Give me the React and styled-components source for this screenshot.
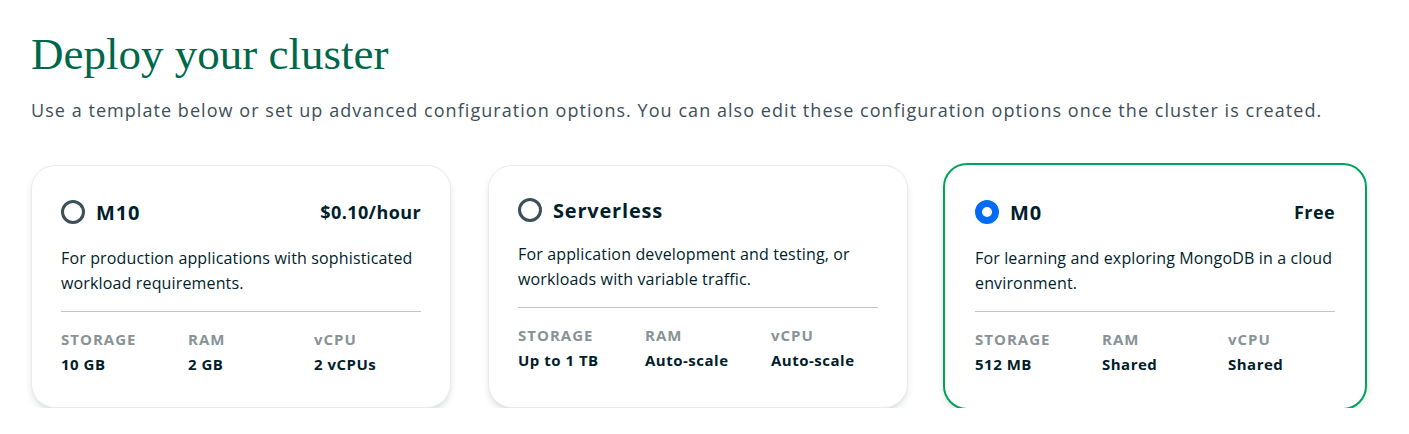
import React from 'react'
import styled, { createGlobalStyle } from 'styled-components'

const Global = createGlobalStyle`
body{
  margin:0;
  background:#ffffff;
  font-family:"Open Sans", "Liberation Sans", sans-serif;
}
`

const Page = styled.div`
padding:28px 31px 0 31px;
`

const Title = styled.h1`
margin:0;
font-family:"Liberation Serif", serif;
font-weight:400;
font-size:45px;
line-height:52px;
color:#00684A;
`

const Lead = styled.p`
margin:18px 0 0 0;
font-size:18px;
line-height:24px;
letter-spacing:1.05px;
color:#3D4F58;
`

const Cards = styled.div`
display:flex;
align-items:flex-start;
gap:37px;
margin-top:43px;
`

const Card = styled.div`
width:${p => p.selected ? '424px' : '420px'};
height:${p => p.selected ? '247px' : '243px'};
margin:${p => p.selected ? '-2px' : '0'};
flex-shrink:0;
box-sizing:border-box;
padding:${p => p.selected ? '33px 30px 0 30px' : '32px 29px 0 29px'};
border-radius:24px;
background:#fff;
border:${p => p.selected ? '2px solid #00A35C' : '1px solid #E8EDEB'};
box-shadow:0 4px 10px -4px rgba(0,30,43,0.3);
`

const Head = styled.div`
display:flex;
align-items:center;
justify-content:space-between;
height:${p => p.short ? '24px' : '28px'};
`

const Name = styled.div`
display:flex;
align-items:center;
gap:11px;
font-size:20px;
font-weight:700;
letter-spacing:0.8px;
color:#001E2B;
`

const Radio = styled.span`
width:24px;
height:24px;
flex-shrink:0;
box-sizing:border-box;
border-radius:50%;
border:${p => p.checked ? '7px solid #016BF8' : '3px solid #3D4F58'};
background:#fff;
`

const Price = styled.div`
font-size:18px;
font-weight:700;
letter-spacing:0.4px;
color:#001E2B;
`

const Desc = styled.p`
margin:20px 0 0 0;
font-size:16px;
line-height:25px;
letter-spacing:0.15px;
color:#001E2B;
`

const Divider = styled.hr`
margin:15px 0 0 0;
border:0;
border-top:1px solid #C1C7C6;
`

const Specs = styled.div`
display:grid;
grid-template-columns:127px 126px 1fr;
margin-top:17px;
`

const Label = styled.div`
font-size:15px;
font-weight:700;
letter-spacing:1px;
color:#889397;
line-height:20px;
`

const Value = styled.div`
font-size:15px;
font-weight:700;
letter-spacing:0.5px;
color:#001E2B;
line-height:20px;
margin-top:5px;
`

const plans = [
  { name:'M10', price:'$0.10/hour', desc:'For production applications with sophisticated workload requirements.', specs:['10 GB','2 GB','2 vCPUs'] },
  { name:'Serverless', desc:'For application development and testing, or workloads with variable traffic.', specs:['Up to 1 TB','Auto-scale','Auto-scale'] },
  { name:'M0', price:'Free', desc:'For learning and exploring MongoDB in a cloud environment.', specs:['512 MB','Shared','Shared'], selected:true },
]

const labels = ['STORAGE','RAM','vCPU']

export default function App(){
  return (
    <Page>
      <Global/>
      <Title>Deploy your cluster</Title>
      <Lead>Use a template below or set up advanced configuration options. You can also edit these configuration options once the cluster is created.</Lead>
      <Cards>
        {plans.map(p => (
          <Card key={p.name} selected={p.selected}>
            <Head short={!p.price}>
              <Name><Radio checked={p.selected}/>{p.name}</Name>
              {p.price && <Price>{p.price}</Price>}
            </Head>
            <Desc>{p.desc}</Desc>
            <Divider/>
            <Specs>
              {labels.map(l => <Label key={l}>{l}</Label>)}
              {p.specs.map((s,i) => <Value key={i}>{s}</Value>)}
            </Specs>
          </Card>
        ))}
      </Cards>
    </Page>
  )
}
